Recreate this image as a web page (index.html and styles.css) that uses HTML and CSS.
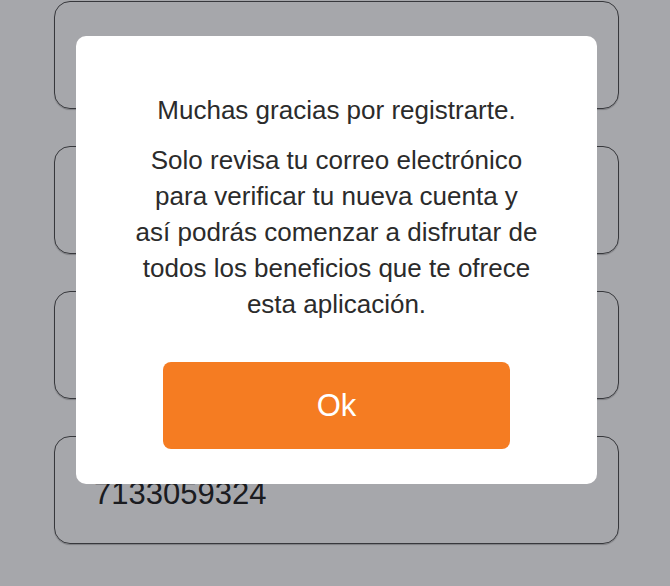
FILE: index.html
```html
<!DOCTYPE html>
<html lang="es">
<head>
    <meta charset="UTF-8">
    <meta name="viewport" content="width=device-width, initial-scale=1.0">
    <title>Registro</title>
    <link rel="stylesheet" href="styles.css">
</head>
<body>
    <div class="form">
        <div class="field"></div>
        <div class="field"></div>
        <div class="field"></div>
        <div class="field">7133059324</div>
    </div>

    <div class="overlay">
        <div class="modal">
            <p class="thanks">Muchas gracias por registrarte.</p>
            <p class="message">
                Solo revisa tu correo electrónico<br>
                para verificar tu nueva cuenta y<br>
                así podrás comenzar a disfrutar de<br>
                todos los beneficios que te ofrece<br>
                esta aplicación.
            </p>
            <button class="ok-button">Ok</button>
        </div>
    </div>
</body>
</html>
```

FILE: styles.css
```css
body {
    margin: 0;
    padding: 0;
    background: #fff;
    font-family: "Liberation Sans", Arial, sans-serif;
    color: #2b2b2b;
}

.form {
    padding: 1px 0 0 54px;
}

.field {
    box-sizing: border-box;
    width: 565px;
    height: 108px;
    margin-bottom: 37px;
    padding: 8px 0 0 39px;
    display: flex;
    align-items: center;
    border: 1px solid #555;
    border-radius: 16px;
    box-shadow: 0 1px 1px rgba(0, 0, 0, 0.25);
    font-size: 31px;
    color: #2a2a2a;
}

.overlay {
    position: fixed;
    top: 0;
    left: 0;
    right: 0;
    bottom: 0;
    background: rgba(0, 2, 14, 0.35);
    display: flex;
    justify-content: center;
    align-items: flex-start;
    padding: 36px 0 0 3px;
}

.modal {
    box-sizing: border-box;
    width: 521px;
    height: 448px;
    padding: 56px 20px 0;
    background: #fff;
    border-radius: 10px;
    text-align: center;
    display: flex;
    flex-direction: column;
    align-items: center;
}

.thanks,
.message {
    margin: 0;
    font-size: 26px;
    line-height: 36px;
    color: #2b2b2b;
}

.message {
    margin-top: 14px;
}

.ok-button {
    margin-top: 40px;
    width: 347px;
    height: 87px;
    border: none;
    border-radius: 8px;
    background-color: #f57c22;
    color: #fff;
    font-family: "Liberation Sans", Arial, sans-serif;
    font-size: 31px;
    cursor: pointer;
}
```
